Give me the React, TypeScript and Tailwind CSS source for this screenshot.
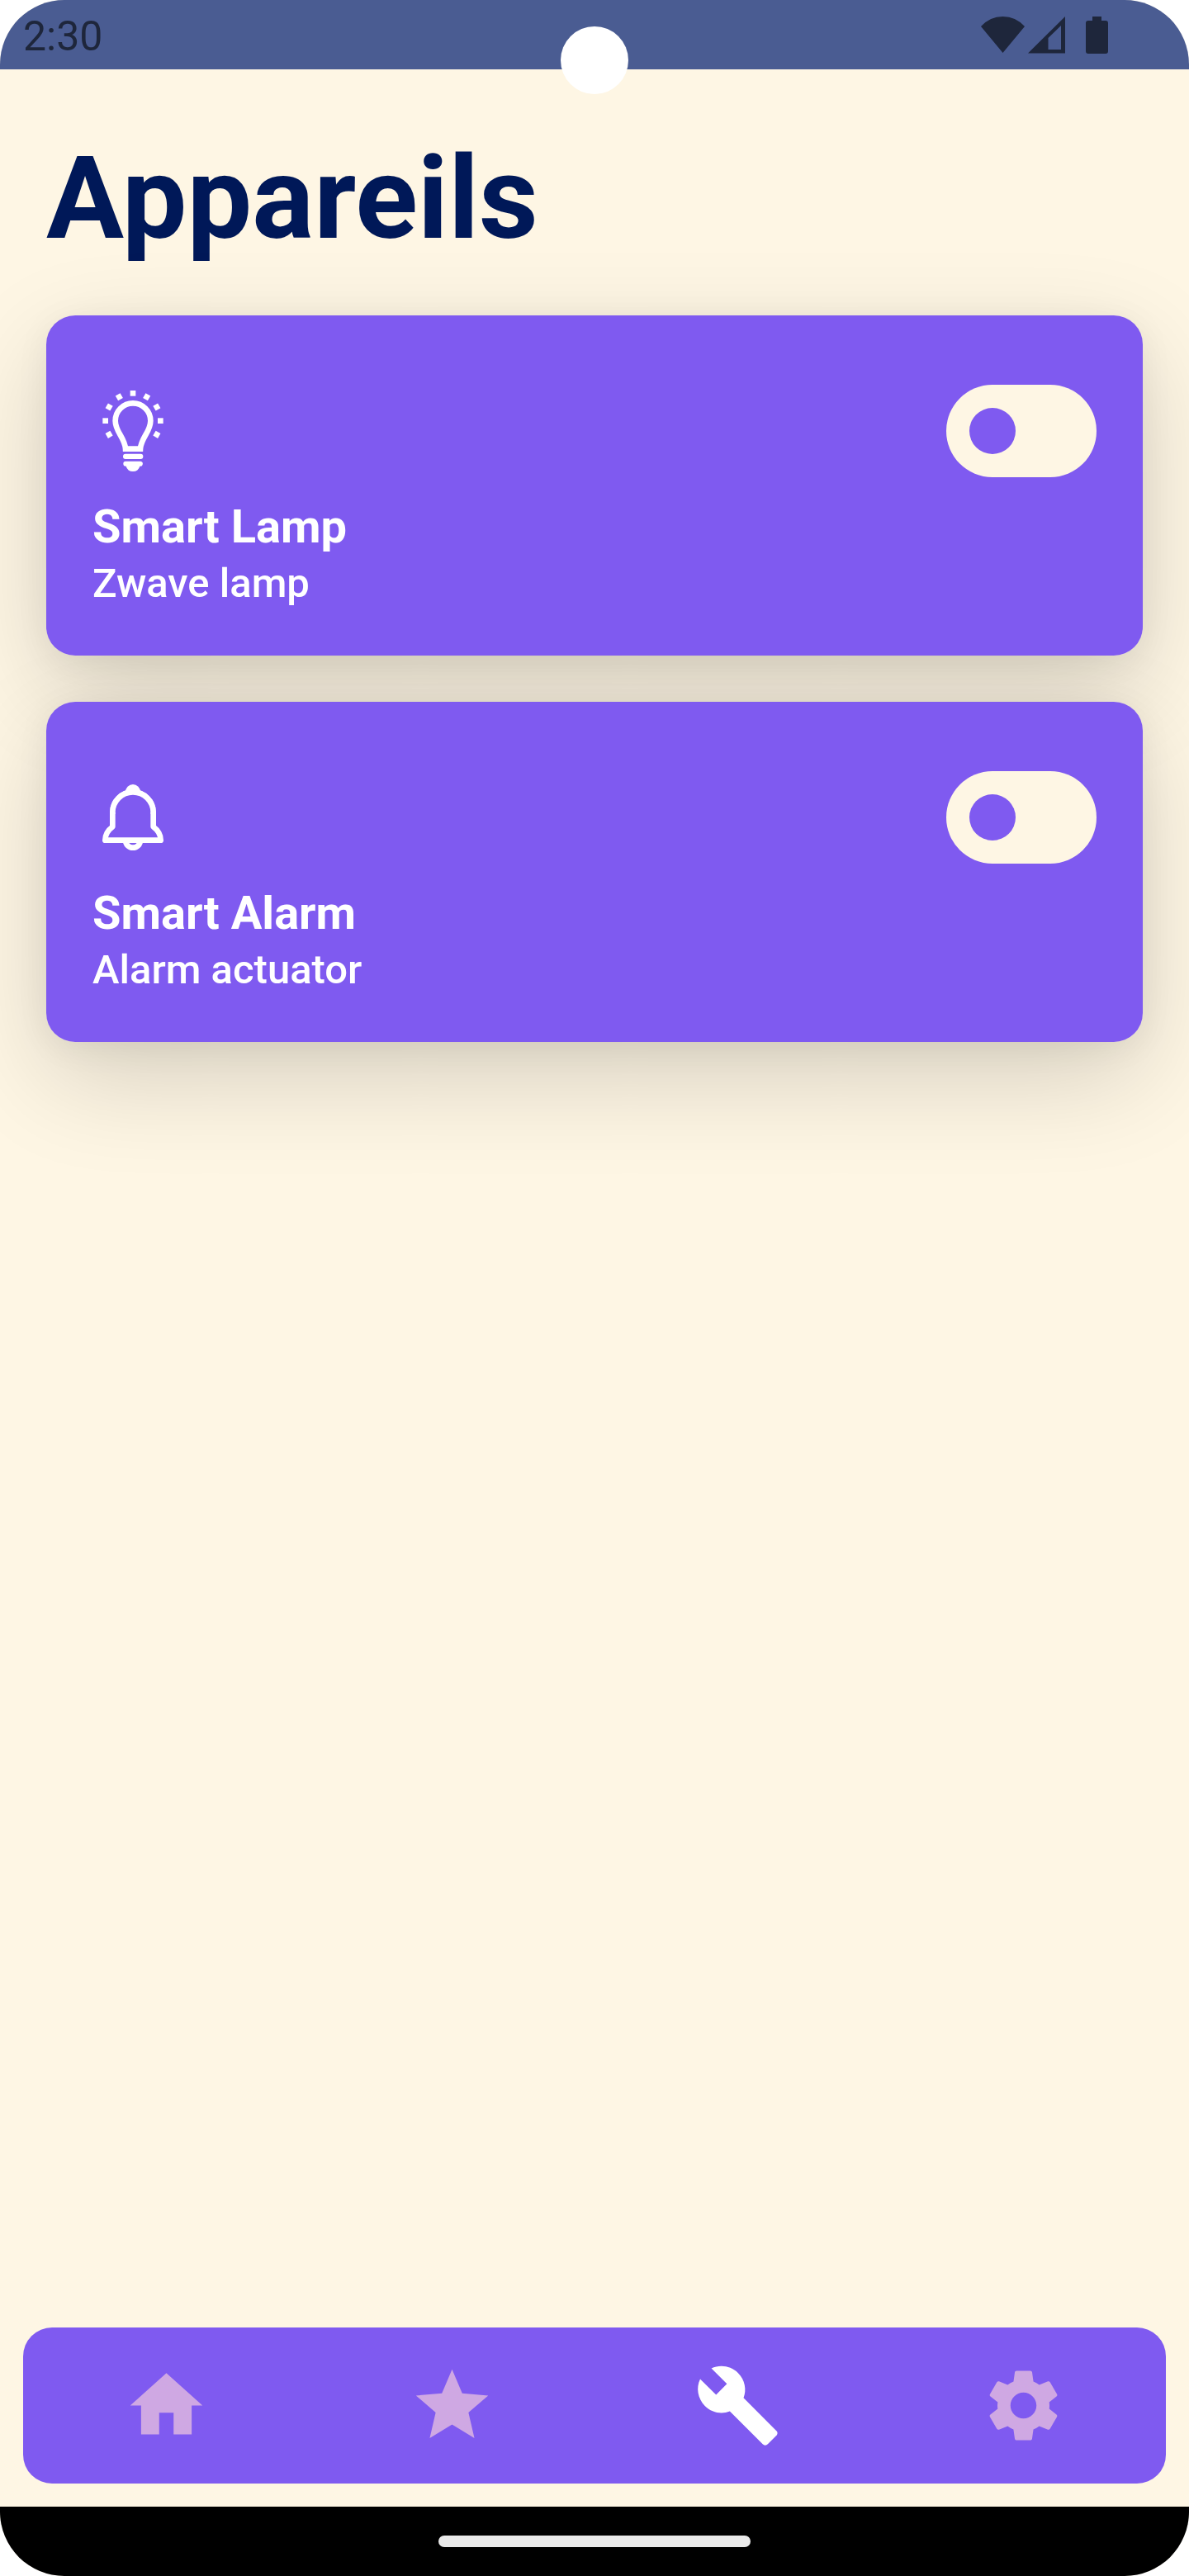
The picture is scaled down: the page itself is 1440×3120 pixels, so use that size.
import { useState, type ReactNode } from "react";
import { MdBuild, MdHome, MdSettings, MdStar } from "react-icons/md";

const rays = [-120, -90, -60, -30, 0, 30, 60, 90, 120];

function LampIcon() {
  return (
    <svg viewBox="0 0 294 294" className="size-[98px]" fill="currentColor" aria-hidden="true">
      {rays.map((angle) => (
        <rect key={angle} x="137" y="0" width="20" height="20" transform={`rotate(${angle} 147 110)`} />
      ))}
      <path
        d="M120 212C118 172 83 150 83 110A64 64 0 0 1 211 110C211 150 176 172 174 212Z"
        fill="none"
        stroke="currentColor"
        strokeWidth="20"
      />
      <rect x="111" y="230" width="73" height="19" rx="9" />
      <path d="M120 257H175A9 9 0 0 1 172 275A26 26 0 0 1 122 275A9 9 0 0 1 120 257Z" />
    </svg>
  );
}

function BellIcon() {
  return (
    <svg viewBox="0 0 294 294" className="size-[98px]" fill="none" stroke="currentColor" strokeWidth="20" aria-hidden="true">
      <path
        d="M46 230C46 208 58 192 73 181V129A74 74 0 0 1 221 129V181C236 192 248 208 248 230Z"
        strokeLinejoin="round"
      />
      <circle cx="147" cy="54" r="27" fill="currentColor" stroke="none" />
      <path d="M73 129A74 74 0 0 1 221 129Z" className="fill-[#7f5af0]" stroke="none" />
      <path d="M73 134V129A74 74 0 0 1 221 129V134" />
      <path d="M120 230A27 27 0 0 0 174 230" />
    </svg>
  );
}

type Device = { id: string; name: string; detail: string; icon: ReactNode };

const devices: Device[] = [
  { id: "lamp", name: "Smart Lamp", detail: "Zwave lamp", icon: <LampIcon /> },
  { id: "alarm", name: "Smart Alarm", detail: "Alarm actuator", icon: <BellIcon /> },
];

function DeviceCard({ device }: { device: Device }) {
  const [on, setOn] = useState(false);
  return (
    <li className="relative flex flex-col gap-[22px] rounded-[35px] bg-[#7f5af0] px-14 pt-[84px] pb-14 text-white before:absolute before:inset-0 before:-z-10 before:rounded-[35px] before:shadow-[0_42px_126px_rgba(0,0,0,0.16),0_7px_42px_rgba(0,0,0,0.06)]">
      <div className="flex items-center justify-between">
        {device.icon}
        <label className="relative flex h-28 w-[182px] cursor-pointer items-center rounded-full bg-[#fef6e4] px-7">
          <input
            type="checkbox"
            role="switch"
            aria-label={device.name}
            checked={on}
            onChange={(event) => setOn(event.target.checked)}
            className="peer absolute inset-0 cursor-pointer appearance-none rounded-full"
          />
          <span className="size-14 rounded-full bg-[#7f5af0] transition-transform peer-checked:translate-x-[70px]" />
        </label>
      </div>
      <div>
        <h2 className="text-[56px] leading-[76px] font-bold">{device.name}</h2>
        <p className="text-[49px] leading-[62px] font-medium">{device.detail}</p>
      </div>
    </li>
  );
}

const tabs = [
  { id: "home", label: "Accueil", Icon: MdHome },
  { id: "favorites", label: "Favoris", Icon: MdStar },
  { id: "devices", label: "Appareils", Icon: MdBuild },
  { id: "settings", label: "Paramètres", Icon: MdSettings },
];

function StatusBar() {
  return (
    <header className="relative flex h-[84px] items-center justify-between bg-[#4a5c92] pr-[98px] pl-7 text-[#1e263b]">
      <time className="pt-1 text-[50px] leading-[58px]">2:30</time>
      <svg viewBox="0 0 154 46" className="h-[46px] w-[154px]" fill="currentColor" aria-hidden="true">
        <path d="M0 13Q11 1 26.500 1Q42 1 53 13L26.500 45Z" />
        <path fillRule="evenodd" d="M57 45.500L102 1V45.500ZM81.500 27V41H97V12Z" />
        <path d="M135 1H146V6H151Q154 6 154 9V43Q154 46 151 46H130Q127 46 127 43V9Q127 6 130 6H135Z" />
      </svg>
      <span className="absolute top-8 left-1/2 size-[82px] -translate-x-1/2 rounded-full bg-white" />
    </header>
  );
}

export default function App() {
  const [active, setActive] = useState("devices");
  return (
    <div className="min-h-screen bg-white font-['Roboto',sans-serif]">
      <div className="flex min-h-screen flex-col overflow-hidden rounded-[78px] bg-[#fef6e4]">
        <StatusBar />
        <main className="flex-1 px-14 pt-[74px]">
          <h1 className="mb-[60px] text-[140px] leading-[164px] font-bold text-[#001858]">Appareils</h1>
          <ul className="isolate flex flex-col gap-14">
            {devices.map((device) => (
              <DeviceCard key={device.id} device={device} />
            ))}
          </ul>
        </main>
        <nav className="m-7 grid h-[189px] grid-cols-4 rounded-[35px] bg-[#7f5af0]">
          {tabs.map(({ id, label, Icon }) => (
            <button
              key={id}
              type="button"
              aria-label={label}
              aria-current={active === id ? "page" : undefined}
              onClick={() => setActive(id)}
              className={
                active === id
                  ? "flex cursor-pointer items-center justify-center text-white"
                  : "flex cursor-pointer items-center justify-center text-[#cfa8e3]"
              }
            >
              <Icon className="size-[105px]" aria-hidden="true" />
            </button>
          ))}
        </nav>
        <footer className="flex h-[84px] items-center justify-center bg-black">
          <span className="h-3.5 w-[378px] rounded-full bg-[#eaeaea]" />
        </footer>
      </div>
    </div>
  );
}
